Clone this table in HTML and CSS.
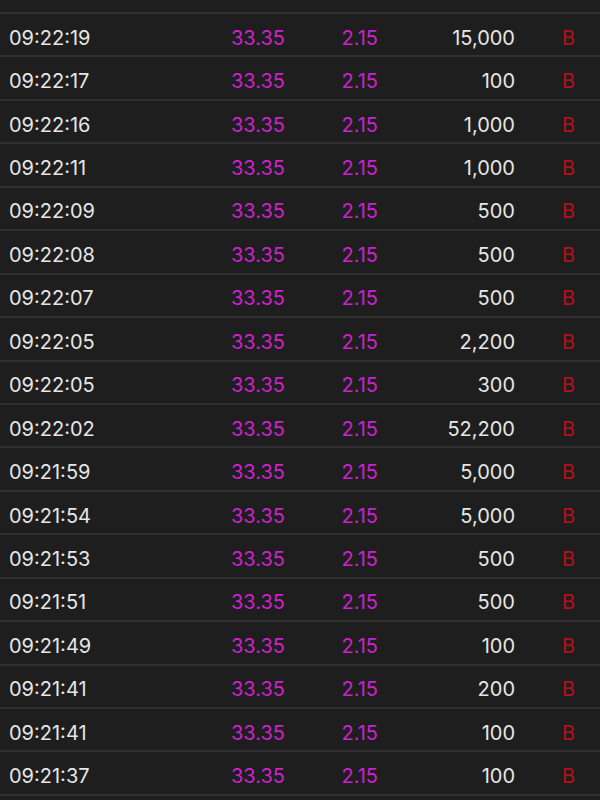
FILE: index.html
```html
<!DOCTYPE html>
<html lang="zh-Hant">
<head>
  <meta charset="UTF-8">
  <meta name="viewport" content="width=device-width, initial-scale=1.0">
  <title>成交明細</title>
  <link rel="stylesheet" href="styles.css">
</head>
<body>
  <div class="ticks">
    <div class="tick-head"></div>
    <div class="tick"><span class="time">09:22:19</span><span class="price">33.35</span><span class="chg">2.15</span><span class="vol">15,000</span><span class="side">B</span></div>
    <div class="tick"><span class="time">09:22:17</span><span class="price">33.35</span><span class="chg">2.15</span><span class="vol">100</span><span class="side">B</span></div>
    <div class="tick"><span class="time">09:22:16</span><span class="price">33.35</span><span class="chg">2.15</span><span class="vol">1,000</span><span class="side">B</span></div>
    <div class="tick"><span class="time">09:22:11</span><span class="price">33.35</span><span class="chg">2.15</span><span class="vol">1,000</span><span class="side">B</span></div>
    <div class="tick"><span class="time">09:22:09</span><span class="price">33.35</span><span class="chg">2.15</span><span class="vol">500</span><span class="side">B</span></div>
    <div class="tick"><span class="time">09:22:08</span><span class="price">33.35</span><span class="chg">2.15</span><span class="vol">500</span><span class="side">B</span></div>
    <div class="tick"><span class="time">09:22:07</span><span class="price">33.35</span><span class="chg">2.15</span><span class="vol">500</span><span class="side">B</span></div>
    <div class="tick"><span class="time">09:22:05</span><span class="price">33.35</span><span class="chg">2.15</span><span class="vol">2,200</span><span class="side">B</span></div>
    <div class="tick"><span class="time">09:22:05</span><span class="price">33.35</span><span class="chg">2.15</span><span class="vol">300</span><span class="side">B</span></div>
    <div class="tick"><span class="time">09:22:02</span><span class="price">33.35</span><span class="chg">2.15</span><span class="vol">52,200</span><span class="side">B</span></div>
    <div class="tick"><span class="time">09:21:59</span><span class="price">33.35</span><span class="chg">2.15</span><span class="vol">5,000</span><span class="side">B</span></div>
    <div class="tick"><span class="time">09:21:54</span><span class="price">33.35</span><span class="chg">2.15</span><span class="vol">5,000</span><span class="side">B</span></div>
    <div class="tick"><span class="time">09:21:53</span><span class="price">33.35</span><span class="chg">2.15</span><span class="vol">500</span><span class="side">B</span></div>
    <div class="tick"><span class="time">09:21:51</span><span class="price">33.35</span><span class="chg">2.15</span><span class="vol">500</span><span class="side">B</span></div>
    <div class="tick"><span class="time">09:21:49</span><span class="price">33.35</span><span class="chg">2.15</span><span class="vol">100</span><span class="side">B</span></div>
    <div class="tick"><span class="time">09:21:41</span><span class="price">33.35</span><span class="chg">2.15</span><span class="vol">200</span><span class="side">B</span></div>
    <div class="tick"><span class="time">09:21:41</span><span class="price">33.35</span><span class="chg">2.15</span><span class="vol">100</span><span class="side">B</span></div>
    <div class="tick"><span class="time">09:21:37</span><span class="price">33.35</span><span class="chg">2.15</span><span class="vol">100</span><span class="side">B</span></div>
  </div>
</body>
</html>
```

FILE: styles.css
```css
* {
  box-sizing: border-box;
}

body {
  margin: 0;
  background-color: #1e1e1e;
  font-family: 'Inter', 'Noto Sans CJK TC', sans-serif;
  color: #e6e6e6;
  height: 800px;
  overflow: hidden;
}

.ticks {
  display: flex;
  flex-direction: column;
}

.tick-head {
  height: 14px;
  flex-shrink: 0;
  border-bottom: 2px solid #303030;
}

.tick {
  display: flex;
  align-items: center;
  flex-shrink: 0;
  height: 43.45px;
  padding-top: 6px;
  border-bottom: 2px solid #303030;
  font-size: 20px;
  line-height: 1;
}

.time {
  width: 150px;
  padding-left: 9px;
}

.price {
  width: 135px;
  text-align: right;
  color: #cc22cc; /* magenta */
}

.chg {
  width: 93px;
  text-align: right;
  color: #cc22cc;
}

.vol {
  width: 137px;
  text-align: right;
}

.side {
  width: 60px;
  text-align: right;
  color: #b3101c;
}
```
